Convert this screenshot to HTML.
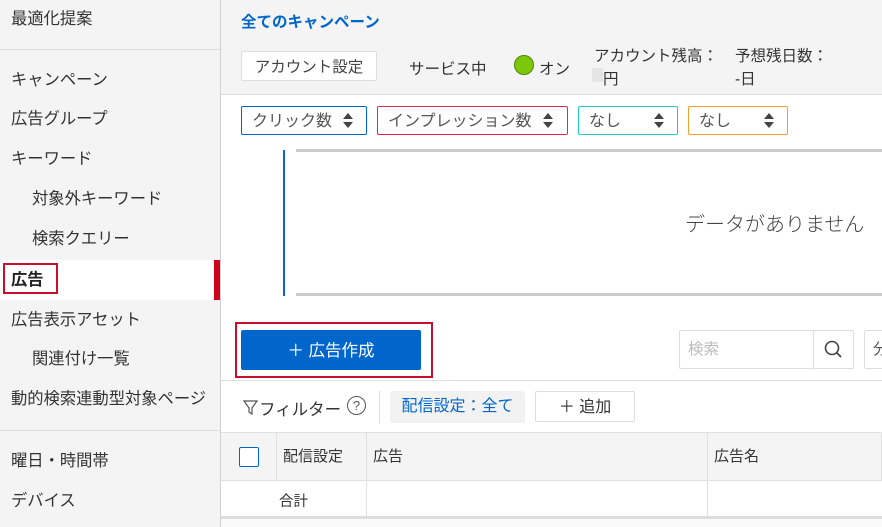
<!DOCTYPE html>
<html><head><meta charset="utf-8"><style>
*{box-sizing:border-box;margin:0;padding:0}
body{width:882px;height:527px;overflow:hidden;background:#fff;font-family:"Liberation Sans","Noto Sans CJK JP",sans-serif;color:#333;position:relative;font-size:15px}
.a{position:absolute;white-space:nowrap}
#side{position:absolute;left:0;top:0;width:221px;height:527px;background:#f4f4f4;border-right:1px solid #d0d0d0}
#side .i{position:absolute;left:11px;font-size:16.3px;color:#333;line-height:20px}
#side .s{left:32px}
.sel{position:absolute;top:106px;height:29px;border:1px solid;border-radius:2px;background:#fff;font-size:16px;color:#555;padding-left:10px;line-height:29px}
.ar{position:absolute;top:6px;width:0;height:0}
.ar:before{content:"";position:absolute;left:-5px;top:0;border:5px solid transparent;border-bottom:6px solid #444;border-top:0}
.ar:after{content:"";position:absolute;left:-5px;top:9px;border:5px solid transparent;border-top:6px solid #444;border-bottom:0}
.th{position:absolute;top:432px;height:49px;border-right:1px solid #e0e0e0;font-size:15px;line-height:50px;padding-left:6px}
</style></head><body>
<div id="side">
<div class="i" style="top:9px">最適化提案</div>
<div class="a" style="left:0;top:49px;width:220px;height:1px;background:#ddd"></div>
<div class="i" style="top:70px">キャンペーン</div>
<div class="i" style="top:109px">広告グループ</div>
<div class="i" style="top:149px">キーワード</div>
<div class="i s" style="top:189px">対象外キーワード</div>
<div class="i s" style="top:229px">検索クエリー</div>
<div class="a" style="left:0;top:260px;width:220px;height:40px;background:#fff"></div>
<div class="a" style="left:214px;top:260px;width:6px;height:40px;background:#d0021b"></div>
<div class="a" style="left:3px;top:263px;width:55px;height:31px;border:2px solid #c8102e"></div>
<div class="i" style="top:270px;font-weight:bold;color:#222">広告</div>
<div class="i" style="top:310px">広告表示アセット</div>
<div class="i s" style="top:349px">関連付け一覧</div>
<div class="i" style="top:389px">動的検索連動型対象ページ</div>
<div class="a" style="left:0;top:430px;width:220px;height:1px;background:#ddd"></div>
<div class="i" style="top:451px">曜日・時間帯</div>
<div class="i" style="top:491px">デバイス</div>
</div>

<div class="a" style="left:221px;top:0;width:661px;height:95px;background:#f4f4f4;border-bottom:1px solid #ddd"></div>
<div class="a" style="left:241px;top:10px;font-size:15.5px;font-weight:bold;color:#0066cc">全てのキャンペーン</div>
<div class="a" style="left:241px;top:51px;width:136px;height:30px;background:#fff;border:1px solid #ddd;border-radius:2px;font-size:15.5px;line-height:31px;text-align:center;color:#444">アカウント設定</div>
<div class="a" style="left:409px;top:57px;font-size:15.5px">サービス中</div>
<div class="a" style="left:514px;top:55px;width:20px;height:20px;border-radius:50%;background:#7ac70c;border:1px solid #4b8a00"></div>
<div class="a" style="left:539px;top:57px;font-size:15.5px">オン</div>
<div class="a" style="left:594px;top:44px;font-size:15.5px">アカウント残高：</div>
<div class="a" style="left:592px;top:68px;width:11px;height:14px;background:#e5e5e5"></div>
<div class="a" style="left:603px;top:67px;font-size:15.5px">円</div>
<div class="a" style="left:735px;top:44px;font-size:15.5px">予想残日数：</div>
<div class="a" style="left:735px;top:67px;font-size:15.5px">-日</div>

<div class="sel" style="left:241px;width:126px;border-color:#0066cc">クリック数<span class="ar" style="left:106px"></span></div>
<div class="sel" style="left:377px;width:191px;border-color:#e0294f">インプレッション数<span class="ar" style="left:170px"></span></div>
<div class="sel" style="left:578px;width:100px;border-color:#22c7cc">なし<span class="ar" style="left:80px"></span></div>
<div class="sel" style="left:688px;width:100px;border-color:#f5a02a">なし<span class="ar" style="left:80px"></span></div>

<div class="a" style="left:283px;top:150px;width:2px;height:146px;background:#0a66c2"></div>
<div class="a" style="left:296px;top:149px;width:586px;height:3px;background:#ccc"></div>
<div class="a" style="left:296px;top:293px;width:586px;height:3px;background:#ccc"></div>
<div class="a" style="left:685px;top:208px;font-size:20px;color:#444;font-weight:300">データがありません</div>

<div class="a" style="left:235px;top:322px;width:198px;height:56px;border:2px solid #c8102e"></div>
<div class="a" style="left:241px;top:330px;width:180px;height:40px;background:#0066cc;border-radius:2px;color:#fff;font-size:16.5px;line-height:42px;text-align:center">＋ 広告作成</div>
<div class="a" style="left:679px;top:330px;width:135px;height:39px;border:1px solid #ddd;border-radius:2px;color:#bbb;font-size:15.5px;line-height:38px;padding-left:8px">検索</div>
<div class="a" style="left:813px;top:330px;width:41px;height:39px;border:1px solid #ddd;border-radius:2px"><svg width="39" height="37"><circle cx="18" cy="17" r="6.5" fill="none" stroke="#444" stroke-width="1.6"/><line x1="23" y1="22" x2="27" y2="26" stroke="#444" stroke-width="1.8"/></svg></div>
<div class="a" style="left:864px;top:330px;width:30px;height:39px;border:1px solid #ddd;border-radius:2px;font-size:15.5px;line-height:38px;padding-left:8px;color:#555">分</div>
<div class="a" style="left:221px;top:380px;width:661px;height:1px;background:#ddd"></div>

<svg class="a" style="left:243px;top:400px" width="16" height="16"><path d="M1 1H14L9 8V14L6 12V8Z" fill="none" stroke="#555" stroke-width="1.2"/></svg>
<div class="a" style="left:259px;top:396px;font-size:16.5px">フィルター</div>
<div class="a" style="left:347px;top:396px;width:19px;height:19px;border:1.3px solid #555;border-radius:50%;font-size:13px;text-align:center;line-height:17px;color:#555">?</div>
<div class="a" style="left:379px;top:391px;width:1px;height:33px;background:#ddd"></div>
<div class="a" style="left:390px;top:391px;width:135px;height:32px;background:#f2f2f2;border-radius:2px;color:#0066cc;font-size:16px;line-height:32px;text-align:center">配信設定：全て</div>
<div class="a" style="left:535px;top:391px;width:100px;height:31px;border:1px solid #ddd;border-radius:2px;font-size:16px;line-height:31px;text-align:center">＋ 追加</div>

<div class="a" style="left:221px;top:432px;width:661px;height:49px;background:#f4f4f4;border-top:1px solid #e0e0e0;border-bottom:1px solid #e0e0e0"></div>
<div class="a" style="left:239px;top:447px;width:20px;height:20px;border:1.5px solid #0066cc;border-radius:2px;background:#fff"></div>
<div class="th" style="left:276px;width:91px;border-left:1px solid #e0e0e0">配信設定</div>
<div class="th" style="left:367px;width:341px">広告</div>
<div class="th" style="left:708px;width:174px">広告名</div>
<div class="a" style="left:366px;top:481px;width:1px;height:46px;background:#e0e0e0"></div>
<div class="a" style="left:707px;top:481px;width:1px;height:46px;background:#e0e0e0"></div>
<div class="a" style="left:279px;top:490px;font-size:14.5px">合計</div>
<div class="a" style="left:221px;top:516px;width:661px;height:3px;background:#ddd"></div>
<div class="a" style="left:221px;top:519px;width:661px;height:8px;background:#fafafa"></div>
</body></html>
